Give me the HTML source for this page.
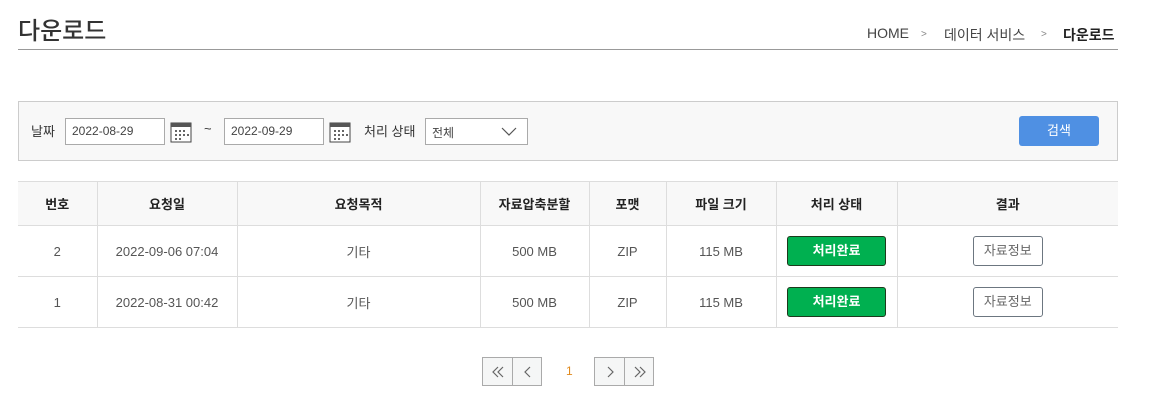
<!DOCTYPE html>
<html><head><meta charset="utf-8"><style>
*{margin:0;padding:0;box-sizing:border-box}
body{width:1155px;height:402px;background:#fff;font-family:"Liberation Sans","Noto Sans CJK KR",sans-serif;color:#333;position:relative;overflow:hidden}
.a{position:absolute}
.t{font-size:24px;left:18px;top:11px;color:#333;font-weight:500}
.hr{left:18px;top:49px;width:1100px;height:1px;background:#999}
.bc{top:25px;font-size:14px;color:#444}
.sb{left:18px;top:101px;width:1100px;height:60px;background:#f8f8f8;border:1px solid #ccc}
.lbl{font-size:13px;color:#333;top:121px}
.inp{top:118px;height:27px;border:1px solid #aaa;background:#fff;font-size:12px;color:#444;padding:5px 0 0 6px}
.btn{left:1019px;top:116px;width:80px;height:30px;background:#4f90e3;border-radius:3px;color:#fff;font-size:13px;text-align:center;line-height:30px}
table{position:absolute;left:18px;top:181px;width:1100px;border-collapse:collapse;font-size:13px}
th,td{border:1px solid #ddd;text-align:center;border-left:1px solid #ddd}
tr>*:first-child{border-left:none}tr>*:last-child{border-right:none}
th{background:#f8f8f8;height:44px;font-weight:bold;color:#222}
td{height:51px;color:#555}
.g{display:inline-block;width:99px;height:30px;background:#00b050;border:1px solid #1c3a1c;border-radius:3px;color:#fff;font-weight:bold;line-height:28px}
.o{display:inline-block;width:70px;height:30px;border:1px solid #6c7680;border-radius:3px;color:#666;line-height:28px}
.pg{top:357px;height:29px;border:1px solid #aaa;background:#f5f6f6}
.pg svg{position:absolute;left:9px;top:8px}
</style></head><body>
<div class="a t">다운로드</div>
<div class="a hr"></div>
<div class="a bc" style="left:867px">HOME</div>
<div class="a bc" style="left:921px;font-size:10px;top:29px;color:#888">&gt;</div>
<div class="a bc" style="left:944px">데이터 서비스</div>
<div class="a bc" style="left:1041px;font-size:10px;top:29px;color:#888">&gt;</div>
<div class="a bc" style="left:1063px;color:#222;font-weight:bold">다운로드</div>
<div class="a sb"></div>
<div class="a lbl" style="left:31px">날짜</div>
<div class="a inp" style="left:65px;width:100px">2022-08-29</div>
<svg class="a" style="left:170px;top:121px" width="22" height="22" viewBox="0 0 22 22"><rect x="1" y="2" width="20" height="19" fill="#fff" stroke="#444"/><rect x="1" y="2" width="20" height="4" fill="#555"/><g fill="#666"><rect x="5" y="9" width="2" height="2"/><rect x="9" y="9" width="2" height="2"/><rect x="13" y="9" width="2" height="2"/><rect x="5" y="13" width="2" height="2"/><rect x="9" y="13" width="2" height="2"/><rect x="13" y="13" width="2" height="2"/><rect x="17" y="13" width="2" height="2"/><rect x="5" y="17" width="2" height="2"/><rect x="9" y="17" width="2" height="2"/></g></svg>
<div class="a lbl" style="left:204px">~</div>
<div class="a inp" style="left:224px;width:100px">2022-09-29</div>
<svg class="a" style="left:329px;top:121px" width="22" height="22" viewBox="0 0 22 22"><rect x="1" y="2" width="20" height="19" fill="#fff" stroke="#444"/><rect x="1" y="2" width="20" height="4" fill="#555"/><g fill="#666"><rect x="5" y="9" width="2" height="2"/><rect x="9" y="9" width="2" height="2"/><rect x="13" y="9" width="2" height="2"/><rect x="5" y="13" width="2" height="2"/><rect x="9" y="13" width="2" height="2"/><rect x="13" y="13" width="2" height="2"/><rect x="17" y="13" width="2" height="2"/><rect x="5" y="17" width="2" height="2"/><rect x="9" y="17" width="2" height="2"/></g></svg>
<div class="a lbl" style="left:364px">처리 상태</div>
<div class="a inp" style="left:425px;width:103px">전체</div>
<svg class="a" style="left:501px;top:127px" width="16" height="9"><path d="M1 1 L8 8 L15 1" fill="none" stroke="#555" stroke-width="1.2"/></svg>
<div class="a btn">검색</div>
<table>
<tr><th style="width:79px">번호</th><th style="width:140px">요청일</th><th style="width:243px">요청목적</th><th style="width:109px">자료압축분할</th><th style="width:77px">포맷</th><th style="width:110px">파일 크기</th><th style="width:121px">처리 상태</th><th>결과</th></tr>
<tr><td>2</td><td>2022-09-06 07:04</td><td>기타</td><td>500 MB</td><td>ZIP</td><td>115 MB</td><td><span class="g">처리완료</span></td><td><span class="o">자료정보</span></td></tr>
<tr><td>1</td><td>2022-08-31 00:42</td><td>기타</td><td>500 MB</td><td>ZIP</td><td>115 MB</td><td><span class="g">처리완료</span></td><td><span class="o">자료정보</span></td></tr>
</table>
<div class="a pg" style="left:482px;width:31px"><svg width="12" height="12"><path d="M6 1 L1 6 L6 11 M11 1 L6 6 L11 11" fill="none" stroke="#666" stroke-width="1.2"/></svg></div>
<div class="a pg" style="left:512px;width:30px"><svg width="12" height="12"><path d="M8 1 L3 6 L8 11" fill="none" stroke="#666" stroke-width="1.2"/></svg></div>
<div class="a" style="left:566px;top:364px;font-size:12px;color:#e08a1e">1</div>
<div class="a pg" style="left:594px;width:31px"><svg width="12" height="12"><path d="M4 1 L9 6 L4 11" fill="none" stroke="#666" stroke-width="1.2"/></svg></div>
<div class="a pg" style="left:624px;width:30px"><svg width="12" height="12"><path d="M1 1 L6 6 L1 11 M6 1 L11 6 L6 11" fill="none" stroke="#666" stroke-width="1.2"/></svg></div>
</body></html>
